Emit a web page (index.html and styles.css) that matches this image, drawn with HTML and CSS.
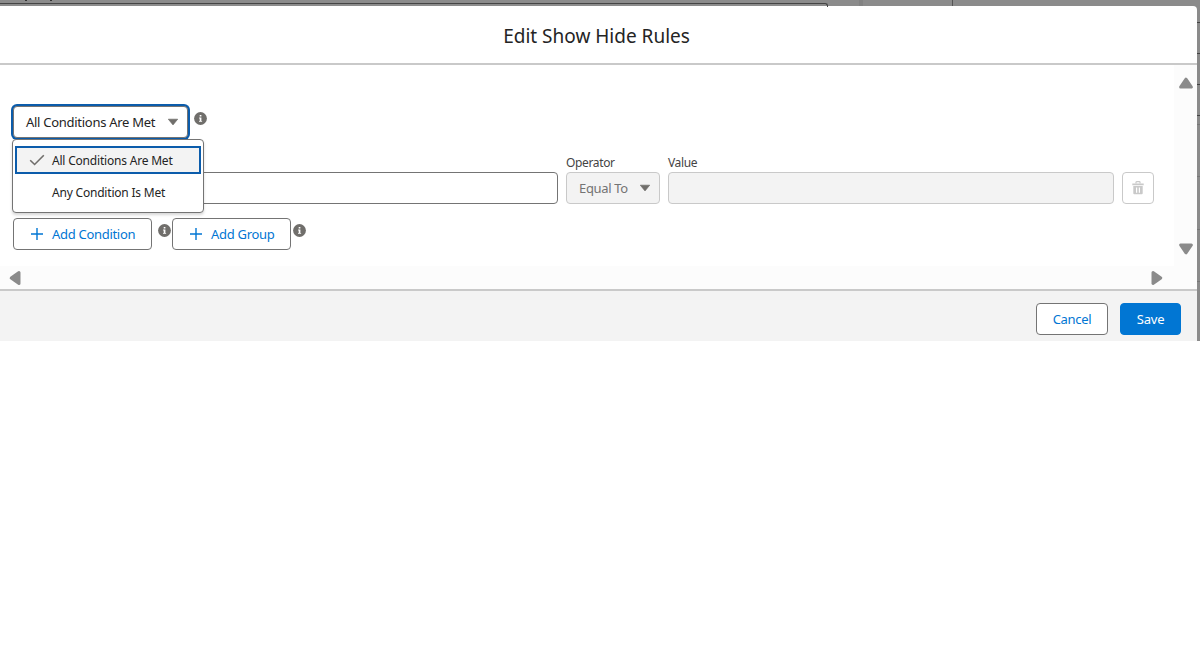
FILE: index.html
```
<!DOCTYPE html>
<html lang="en">
<head>
<meta charset="utf-8">
<title>Edit Show Hide Rules</title>
<link rel="stylesheet" href="styles.css">
</head>
<body>
<svg class="defs" width="0" height="0">
  <symbol id="info" viewBox="0 0 13 13"><circle cx="6.5" cy="6.500" r="6.4" fill="#706e6b"/><path d="M5.700 3h1.700v1.500H5.700zM5.100 5.500h2.300v3.400h.7v.9H5v-.9h.7V6.400h-.6z" fill="#fff"/></symbol>
  <symbol id="plus" viewBox="0 0 14 14"><path d="M7 1v12M1 7h12" stroke="#0176d3" stroke-width="1.4"/></symbol>
  <symbol id="down" viewBox="0 0 12 8"><path d="M1.300 1.200h9.400L6 6.900z" fill="#706e6b" stroke="#706e6b" stroke-width=".7" stroke-linejoin="round"/></symbol>
  <symbol id="scroll" viewBox="0 0 16 12"><path d="M8 2.200 13.400 10H2.600z" fill="#8b8b8b" stroke="#8b8b8b" stroke-width="3" stroke-linejoin="round"/></symbol>
</svg>
<div class="backdrop">
  <div class="page-behind"><i class="speck s1"></i><i class="speck s2"></i><i class="field-line"></i><i class="divider d1"></i><i class="divider d2"></i></div>
  <div class="stage">
    <section class="modal">
      <header class="header"><h1 class="title">Edit Show Hide Rules</h1></header>
      <div class="body">
        <div class="content">
          <div class="logic">
            <div class="combo">
              <button class="select focused"><span class="t-select">All Conditions Are Met</span><svg class="caret"><use href="#down"/></svg></button>
              <ul class="menu">
                <li class="option active"><svg class="check" viewBox="0 0 16 12"><path d="M1.200 6.200 5.600 10.500 14.800 1.300" fill="none" stroke="#706e6b" stroke-width="1.600"/></svg><span class="t-option">All Conditions Are Met</span></li>
                <li class="option"><span class="t-option">Any Condition Is Met</span></li>
              </ul>
            </div>
            <svg class="info"><use href="#info"/></svg>
          </div>
          <div class="condition">
            <div class="col resource"><div class="input"></div></div>
            <div class="col operator"><label class="label">Operator</label><button class="select disabled"><span class="t-equal">Equal To</span><svg class="caret"><use href="#down"/></svg></button></div>
            <div class="col value"><label class="label">Value</label><div class="input disabled"></div></div>
            <button class="trash"><svg width="12" height="14" viewBox="0 0 12 14"><path d="M4 2.500V1.300Q4 .7 4.600.7h2.800Q8 .7 8 1.300v1.200" fill="none" stroke="#c9c9c9" stroke-width="1.200"/><path d="M.3 2.500h11.400v1.700H.3zM1.300 5h9.400v7.300q0 1-1 1H2.300q-1 0-1-1zM4 6.500v5.300h1.200V6.500zM6.800 6.500v5.300H8V6.500z" fill="#c9c9c9" fill-rule="evenodd"/></svg></button>
          </div>
          <div class="actions">
            <button class="btn add-condition"><svg class="plus"><use href="#plus"/></svg><span class="t-action">Add Condition</span></button>
            <svg class="info"><use href="#info"/></svg>
            <button class="btn add-group"><svg class="plus"><use href="#plus"/></svg><span class="t-action">Add Group</span></button>
            <svg class="info"><use href="#info"/></svg>
          </div>
        </div>
        <div class="vbar"><svg class="arrow"><use href="#scroll"/></svg><svg class="arrow flip"><use href="#scroll"/></svg></div>
        <div class="hbar"><svg class="arrow left"><use href="#scroll"/></svg><svg class="arrow right"><use href="#scroll"/></svg></div>
      </div>
      <footer class="footer"><button class="btn cancel"><span class="t-cancel">Cancel</span></button><button class="btn save"><span class="t-save">Save</span></button></footer>
    </section>
    <div class="edge"></div>
  </div>
</div>
</body>
</html>
```
FILE: styles.css
```
* { box-sizing: border-box; }
body { margin: 0; background: #fff; font: 13px/18px "Noto Sans", "Open Sans", sans-serif; color: #242424; }
button { font: inherit; color: inherit; margin: 0; padding: 0; background: #fff; }
span, .label, .title { white-space: nowrap; }
svg { flex: none; display: block; }
.defs { position: absolute; }
.backdrop { width: 1200px; height: 341px; background: #8b8b8b; overflow: hidden; }
.page-behind { position: relative; height: 6px; }
.page-behind i { position: absolute; display: block; }
.speck { top: 0; width: 2px; height: 1px; background: #333; }
.s1 { left: 25px; }
.s2 { left: 50px; }
.field-line { left: 0; top: 3px; width: 828px; height: 4px; border: 1px solid #444; border-width: 1px 1px 0 0; border-radius: 0 3px 0 0; }
.divider { top: 0; width: 1px; height: 6px; }
.d1 { left: 859px; width: 4px; background: #828282; }
.d2 { left: 952px; background: #555; }
.stage { display: flex; height: 335px; }
.modal { width: 1197px; background: #fff; border-radius: 0 4px 0 0; display: flex; flex-direction: column; }
.edge { flex: 1; background: linear-gradient(#444, #444) 0 16px/3px 1px no-repeat, linear-gradient(#444, #444) 0 47px/3px 1px no-repeat, linear-gradient(#444, #444) 0 78px/3px 1px no-repeat, linear-gradient(#444, #444) 0 109px/3px 1px no-repeat, linear-gradient(#777, #777) 0 118px/3px 1px no-repeat, linear-gradient(#777, #777) 0 170px/3px 1px no-repeat, linear-gradient(#777, #777) 0 223px/3px 1px no-repeat, linear-gradient(#777, #777) 0 275px/3px 1px no-repeat; }
.header { height: 59px; border-bottom: 2px solid #c9c9c9; display: flex; align-items: center; justify-content: center; padding: 3px 4px 0 0; }
.title { margin: 0; font-size: 19px; font-weight: 400; line-height: 25px; }
.body { height: 224px; display: grid; grid-template: 201px 23px / 1174px 23px; }
.content { padding: 41px 20px 0 13px; }
.logic { display: flex; height: 66px; gap: 6px; }
.combo { position: relative; width: 175px; height: 32px; }
.select { width: 100%; height: 32px; border: 1px solid #747474; border-radius: 4px; display: flex; align-items: center; justify-content: space-between; padding: 0 8px 0 12px; }
.focused { box-shadow: 0 0 0 2px #0b5cab; }
.caret { width: 12px; height: 8px; }
.info { width: 13px; height: 13px; margin: 5.5px .5px 0 -.5px; }
.menu { position: absolute; z-index: 2; left: -1px; top: 33px; width: 192px; height: 74px; margin: 0; padding: 6px 2px; list-style: none; border: 1px solid #747474; border-radius: 4px; background: #fff; box-shadow: 0 2px 3px rgba(0,0,0,.16); }
.option { position: relative; height: 28px; margin-bottom: 4px; padding: 2px 0 0 37px; display: flex; align-items: center; font-size: 12px; }
.active { background: #f3f3f3; box-shadow: inset 0 0 0 2px #0b5cab; }
.check { position: absolute; left: 14px; top: 8px; width: 16px; height: 12px; }
.condition { display: flex; height: 46px; gap: 8px; align-items: flex-start; }
.col { display: flex; flex-direction: column; justify-content: flex-end; height: 32px; }
.resource { width: 545px; }
.operator { width: 94px; }
.value { width: 446px; }
.label { height: 18px; margin-top: -18px; font-size: 12px; color: #444; letter-spacing: -.35px; }
.input { height: 32px; border: 1px solid #747474; border-radius: 4px; background: #fff; }
.disabled { background: #f3f3f3; border-color: #c9c9c9; color: #747474; }
.trash { width: 32px; height: 32px; border: 1px solid #c9c9c9; border-radius: 4px; display: flex; align-items: center; justify-content: center; }
.actions { display: flex; }
.btn { height: 32px; border: 1px solid #747474; border-radius: 4px; color: #0176d3; display: flex; align-items: center; }
.add-condition { width: 139px; padding-left: 16px; margin-right: 6px; }
.add-group { width: 119px; padding-left: 16px; margin: 0 2px 0 1px; }
.plus { width: 14px; height: 14px; margin-right: 8px; }
.vbar { background: #fcfcfc; display: flex; flex-direction: column; justify-content: space-between; padding: 12px 0 11px 3.5px; }
.hbar { grid-column: 1 / 3; background: #fcfcfc; display: flex; align-items: center; justify-content: space-between; padding: 0 32.5px 0 6.5px; }
.arrow { width: 16px; height: 12px; }
.flip { transform: rotate(180deg); }
.left { transform: rotate(-90deg); }
.right { transform: rotate(90deg); }
.footer { height: 52px; border-top: 2px solid #c9c9c9; background: #f3f3f3; display: flex; justify-content: flex-end; gap: 12px; padding: 12px 16px 0; }
.cancel { width: 72px; justify-content: center; }
.save { width: 61px; justify-content: center; background: #0176d3; border-color: #0176d3; color: #fff; }
.t-select { letter-spacing: -.28px; }
.t-option { letter-spacing: -.2px; }
.t-equal { letter-spacing: -.35px; }
.t-action { letter-spacing: -.3px; }
.t-cancel { letter-spacing: -.3px; }
.t-save { letter-spacing: -.2px; }
```
